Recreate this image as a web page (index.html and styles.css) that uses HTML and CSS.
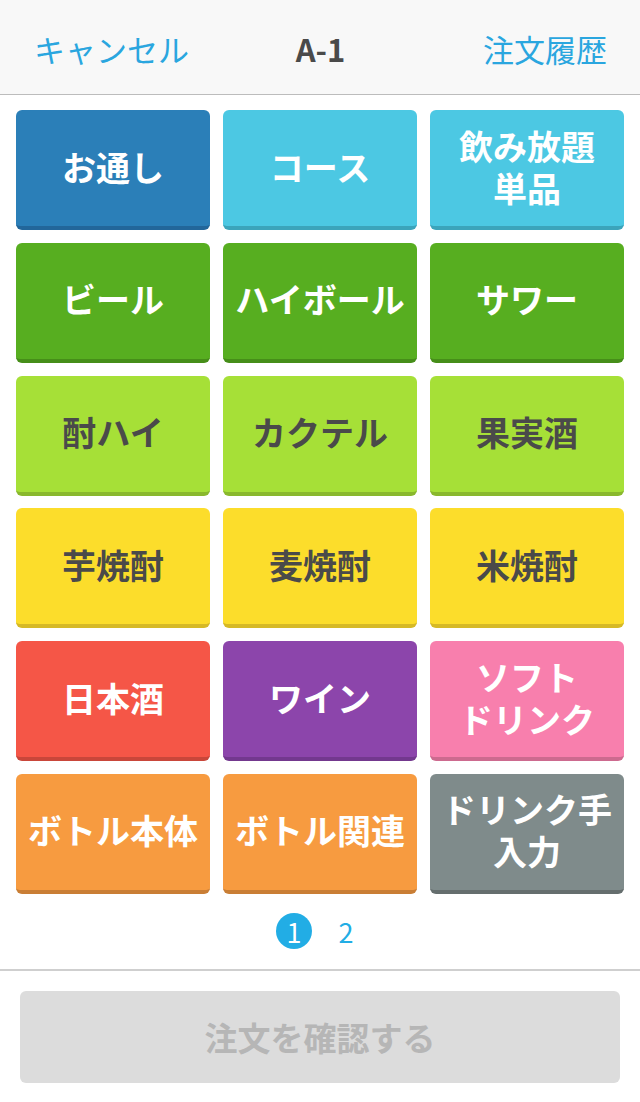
FILE: index.html
```html
<!DOCTYPE html>
<html lang="ja">
<head>
<meta charset="utf-8">
<title>A-1</title>
<link rel="stylesheet" href="styles.css">
</head>
<body>
<div class="app">
  <header class="topbar">
    <span class="nav-link left">キャンセル</span>
    <span class="title">A-1</span>
    <span class="nav-link right">注文履歴</span>
  </header>
  <main class="grid">
    <div class="tile blue">お通し</div>
    <div class="tile cyan">コース</div>
    <div class="tile cyan">飲み放題<br>単品</div>
    <div class="tile green">ビール</div>
    <div class="tile green">ハイボール</div>
    <div class="tile green">サワー</div>
    <div class="tile lime">酎ハイ</div>
    <div class="tile lime">カクテル</div>
    <div class="tile lime">果実酒</div>
    <div class="tile yellow">芋焼酎</div>
    <div class="tile yellow">麦焼酎</div>
    <div class="tile yellow">米焼酎</div>
    <div class="tile red">日本酒</div>
    <div class="tile purple">ワイン</div>
    <div class="tile pink">ソフト<br>ドリンク</div>
    <div class="tile orange">ボトル本体</div>
    <div class="tile orange">ボトル関連</div>
    <div class="tile gray">ドリンク手<br>入力</div>
  </main>
  <nav class="pager">
    <span class="page current">1</span>
    <span class="page">2</span>
  </nav>
  <footer class="footer">
    <div class="confirm">注文を確認する</div>
  </footer>
</div>
</body>
</html>
```
FILE: styles.css
```css
* { box-sizing: border-box; }
html, body {
  margin: 0;
  padding: 0;
  background: #ffffff;
  font-family: "Noto Sans CJK JP", "Noto Sans", sans-serif;
}
.app {
  width: 640px;
  height: 1102px;
  display: flex;
  flex-direction: column;
}
.topbar {
  height: 95px;
  background: #f8f8f8;
  border-bottom: 1px solid #bcbcbc;
  display: grid;
  grid-template-columns: 1fr auto 1fr;
  align-items: center;
  padding: 2px 33px 0 34px;
}
.nav-link {
  color: #2aa6df;
  font-size: 31px;
  line-height: 1;
}
.nav-link.right { justify-self: end; }
.title {
  color: #4a4a4a;
  font-size: 31px;
  font-weight: 700;
  line-height: 1;
}
.grid {
  display: grid;
  grid-template-columns: repeat(3, 194px);
  grid-auto-rows: 120px;
  column-gap: 13px;
  row-gap: 12.8px;
  padding: 15px 16px 0;
}
.tile {
  border-radius: 6px;
  border-bottom: 4px solid rgba(0,0,0,0.18);
  padding-bottom: 3px;
  display: flex;
  align-items: center;
  justify-content: center;
  text-align: center;
  color: #ffffff;
  font-size: 34px;
  font-weight: 700;
  line-height: 42px;
  letter-spacing: 0;
}
.blue { background: #2b7fb8; border-bottom-color: #22669a; }
.cyan { background: #4cc8e3; border-bottom-color: #3ba4bb; }
.green { background: #57ae20; border-bottom-color: #468e19; }
.lime { background: #a6e037; border-bottom-color: #89b82d; color: #4a4a4a; }
.yellow { background: #fcdd2b; border-bottom-color: #d6b925; color: #4a4a4a; }
.red { background: #f55647; border-bottom-color: #c9463a; }
.purple { background: #8c45ab; border-bottom-color: #73388e; }
.pink { background: #f87fad; border-bottom-color: #cd6a8f; }
.orange { background: #f79b40; border-bottom-color: #c97e35; }
.gray { background: #7f8b8b; border-bottom-color: #656e6e; }
.pager {
  height: 77px;
  display: flex;
  align-items: center;
  justify-content: center;
  gap: 16px;
  border-bottom: 2px solid #cfcfcf;
}
.page {
  width: 36px;
  height: 36px;
  border-radius: 50%;
  display: flex;
  align-items: center;
  justify-content: center;
  color: #22ade5;
  font-size: 27px;
  line-height: 1;
}
.page.current {
  background: #22ade5;
  color: #ffffff;
}
.footer {
  flex: 1;
  padding: 20px 20px 19px;
  display: flex;
}
.confirm {
  flex: 1;
  background: #dcdcdc;
  border-radius: 6px;
  display: flex;
  align-items: center;
  justify-content: center;
  color: #b6b6b6;
  font-size: 33px;
  font-weight: 700;
}
```
